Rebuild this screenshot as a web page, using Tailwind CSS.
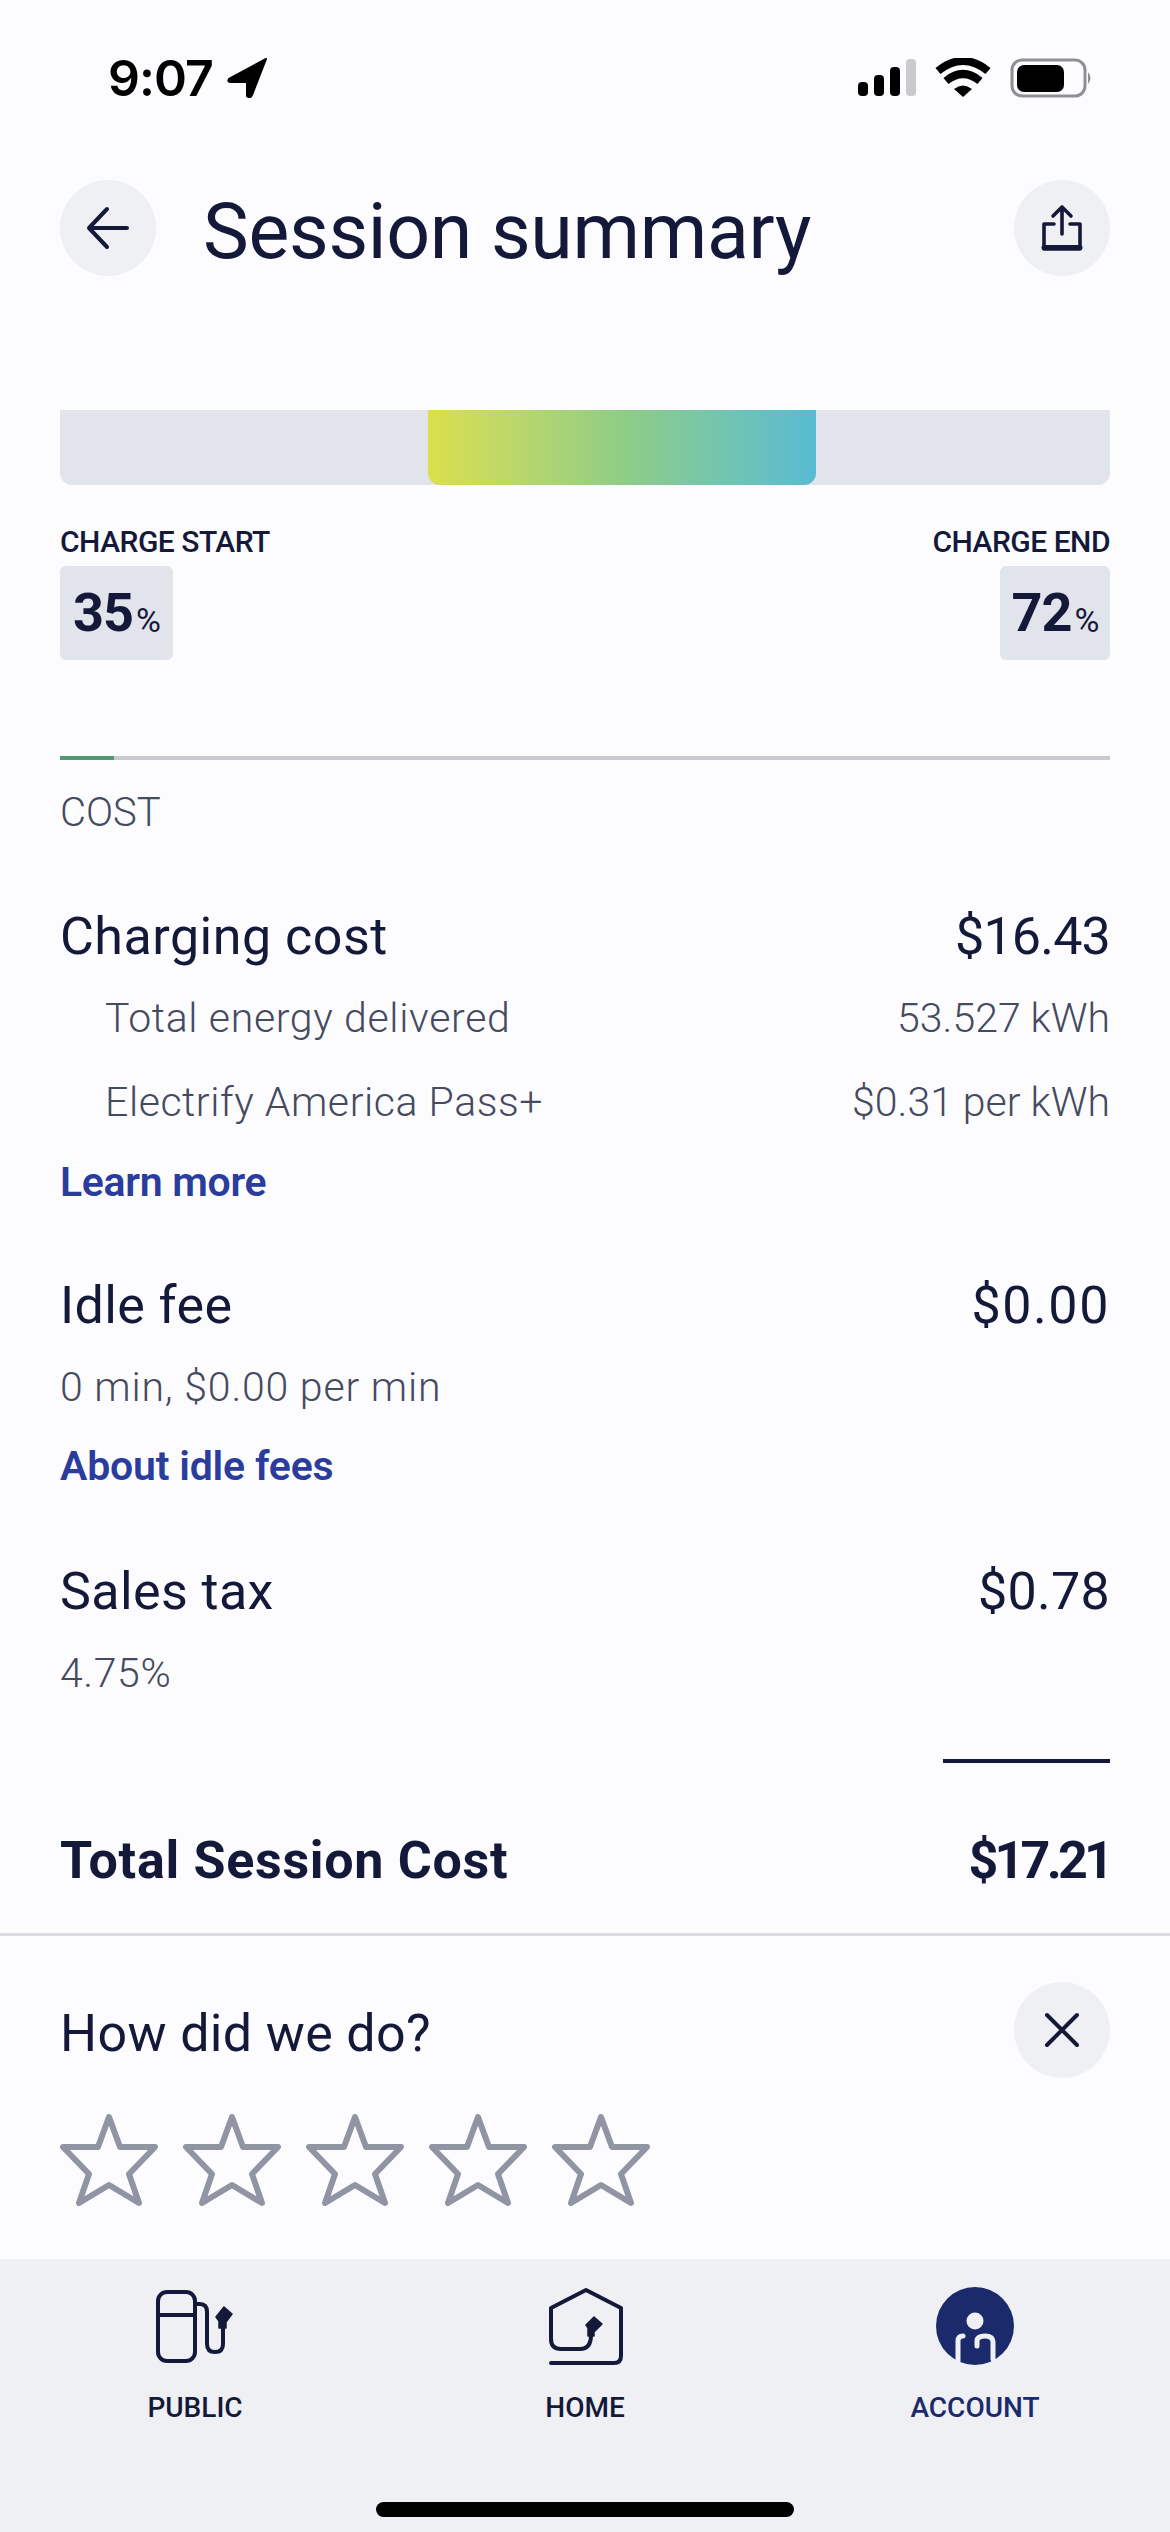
<!DOCTYPE html>
<html lang="en">

<head>
    <meta charset="UTF-8">
    <meta name="viewport" content="width=device-width, initial-scale=1.0">
    <title>Session summary</title>
    <script src="https://cdn.jsdelivr.net/npm/@tailwindcss/browser@4"></script>
</head>

<body>
    <main class="w-[1170px] h-[2532px] flex flex-col bg-[#fcfcff] text-[#14193a] font-['Roboto',sans-serif] overflow-hidden">
        <!-- status bar -->
        <div class="h-[180px] shrink-0 pt-[58px] pl-[108px] pr-[77px] flex justify-between items-start text-black">
            <div class="flex items-center h-[40px] gap-[14px]">
                <span class="font-['Inter',sans-serif] font-semibold text-[50px] leading-[40px] tracking-[-1px]">9:07</span>
                <svg width="42" height="40" viewBox="0 0 42 40"><path d="M39 1 L2 21 Q0 24 4 24 L20 24 L20 38 Q23 41 25 37 Z" fill="#000" stroke="#000" stroke-width="2" stroke-linejoin="round"/></svg>
            </div>
            <div class="flex items-center h-[40px]">
                <svg width="235" height="40" viewBox="0 0 235 40">
                    <rect x="0" y="24" width="10" height="14" rx="4" fill="#000"/>
                    <rect x="16" y="17" width="10" height="21" rx="4" fill="#000"/>
                    <rect x="32" y="9" width="10" height="29" rx="4" fill="#000"/>
                    <rect x="48" y="1" width="10" height="37" rx="4" fill="#c9c9ce"/>
                    <path d="M80 13 Q105 -7 130 13 M88 23 Q105 9 122 23" fill="none" stroke="#000" stroke-width="8"/>
                    <path d="M96 31 Q105 24 114 31 L105 39 Z" fill="#000"/>
                    <rect x="154" y="2" width="73" height="36" rx="10" fill="none" stroke="#8f8f94" stroke-width="3"/>
                    <rect x="159" y="7" width="47" height="27" rx="7" fill="#000"/>
                    <path d="M230 14 Q235 20 230 26 Z" fill="#8f8f94"/>
                </svg>
            </div>
        </div>

        <div class="px-[60px] flex flex-col shrink-0">
            <!-- header -->
            <div class="flex items-center h-[96px]">
                <div class="w-[96px] h-[96px] rounded-full bg-[#eff0f4] flex items-center justify-center">
                    <svg width="44" height="44" viewBox="0 0 44 44" fill="none" stroke="#14193a" stroke-width="4" stroke-linecap="round" stroke-linejoin="round"><path d="M3 22 H41 M21 3 L3 22 L21 41"/></svg>
                </div>
                <h1 class="ml-[47px] mt-[7px] text-[77px] leading-[96px] font-normal tracking-[-0.3px] flex-1">Session summary</h1>
                <div class="w-[96px] h-[96px] rounded-full bg-[#eff0f4] flex items-center justify-center">
                    <svg width="44" height="48" viewBox="0 0 44 48" fill="none" stroke="#14193a" stroke-width="3.6" stroke-linecap="round" stroke-linejoin="round"><path d="M22 30 V3 M13 12 L22 3 L31 12 M14 20 H4 V45 H40 V20 H30"/><path d="M4 43.5 H40" stroke-width="5"/></svg>
                </div>
            </div>

            <!-- charge bar -->
            <div class="mt-[134px] h-[75px] rounded-b-[12px] bg-[#e1e4ea] pl-[368px] shrink-0">
                <div class="w-[388px] h-full rounded-b-[12px] bg-gradient-to-r from-[#dbdf4a] via-[#8fcd85] to-[#57bbd2]"></div>
            </div>
            <div class="mt-[39px] h-[36px] flex justify-between text-[30px] leading-[36px] font-medium tracking-[-0.5px]">
                <span>CHARGE START</span>
                <span>CHARGE END</span>
            </div>
            <div class="mt-[6px] flex justify-between">
                <div class="w-[113px] h-[94px] rounded-[6px] bg-[#e1e4ea] flex items-center justify-center font-bold text-[54px] leading-none tracking-[-1px]">35<span class="ml-[3px] text-[34px] font-normal mt-[14px] tracking-[-1px]">%</span></div>
                <div class="w-[110px] h-[94px] rounded-[6px] bg-[#e1e4ea] flex items-center justify-center font-bold text-[54px] leading-none tracking-[-1px]">72<span class="ml-[3px] text-[34px] font-normal mt-[14px] tracking-[-1px]">%</span></div>
            </div>

            <!-- progress line -->
            <div class="mt-[96px] h-[4px] bg-[#c9cad0]">
                <div class="w-[54px] h-full bg-[#4f9a72]"></div>
            </div>
            <div class="mt-[22px] h-[60px] text-[40px] leading-[62px] font-light text-[#454a5e]">COST</div>

            <!-- cost rows -->
            <div class="mt-[64px] h-[60px] flex justify-between text-[52px] leading-[62px]"><span class="tracking-[0.5px]">Charging cost</span><span class="tracking-[-0.8px]">$16.43</span></div>
            <div class="mt-[26px] h-[50px] pl-[45px] flex justify-between text-[41px] leading-[53px] font-light text-[#454a5e]"><span class="tracking-[0.66px]">Total energy delivered</span><span>53.527 kWh</span></div>
            <div class="mt-[34px] h-[50px] pl-[45px] flex justify-between text-[41px] leading-[53px] font-light text-[#454a5e]"><span class="tracking-[0.56px]">Electrify America Pass+</span><span>$0.31 per kWh</span></div>
            <div class="mt-[30px] h-[50px] text-[41px] leading-[52px] font-semibold text-[#2a3c9c] tracking-[-0.3px]">Learn more</div>

            <div class="mt-[68px] h-[60px] flex justify-between text-[52px] leading-[64px]"><span class="tracking-[0.4px]">Idle fee</span><span class="tracking-[1.6px]">$0.00</span></div>
            <div class="mt-[27px] h-[50px] text-[41px] leading-[53px] font-light text-[#454a5e] tracking-[0.8px]">0 min, $0.00 per min</div>
            <div class="mt-[29px] h-[50px] text-[41px] leading-[52px] font-semibold text-[#2a3c9c] tracking-[-0.2px]">About idle fees</div>

            <div class="mt-[70px] h-[60px] flex justify-between text-[52px] leading-[64px]"><span class="tracking-[0.4px]">Sales tax</span><span class="tracking-[0.3px]">$0.78</span></div>
            <div class="mt-[27px] h-[50px] text-[41px] leading-[53px] font-light text-[#454a5e] tracking-[0.6px]">4.75%</div>

            <div class="mt-[62px] h-[4px] w-[167px] self-end bg-[#14193a]"></div>
            <div class="mt-[66px] h-[60px] flex justify-between text-[52px] leading-[64px] font-bold"><span class="tracking-[0.7px]">Total Session Cost</span><span class="tracking-[-3.8px]">$17.21</span></div>
        </div>

        <!-- feedback -->
        <div class="mt-[44px] flex-1 border-t-[3px] border-[#dcdde3] px-[60px] pt-[46px] flex flex-col">
            <div class="flex justify-between items-center h-[96px]">
                <span class="text-[52px] leading-[60px] mt-[8px] tracking-[0.35px]">How did we do?</span>
                <div class="w-[96px] h-[96px] rounded-full bg-[#eff0f4] flex items-center justify-center">
                    <svg width="36" height="36" viewBox="0 0 36 36" fill="none" stroke="#14193a" stroke-width="4" stroke-linecap="round"><path d="M3 3 L33 33 M33 3 L3 33"/></svg>
                </div>
            </div>
            <div class="mt-[36px] flex gap-[25px]">
                <svg width="98" height="92" viewBox="0 0 98 92" fill="none" stroke="#9094a3" stroke-width="6" stroke-linejoin="round"><path d="M49 3 L60 33 H95 L69 60 L79 89 L49 71 L19 89 L29 60 L3 33 H38 Z"/></svg>
                <svg width="98" height="92" viewBox="0 0 98 92" fill="none" stroke="#9094a3" stroke-width="6" stroke-linejoin="round"><path d="M49 3 L60 33 H95 L69 60 L79 89 L49 71 L19 89 L29 60 L3 33 H38 Z"/></svg>
                <svg width="98" height="92" viewBox="0 0 98 92" fill="none" stroke="#9094a3" stroke-width="6" stroke-linejoin="round"><path d="M49 3 L60 33 H95 L69 60 L79 89 L49 71 L19 89 L29 60 L3 33 H38 Z"/></svg>
                <svg width="98" height="92" viewBox="0 0 98 92" fill="none" stroke="#9094a3" stroke-width="6" stroke-linejoin="round"><path d="M49 3 L60 33 H95 L69 60 L79 89 L49 71 L19 89 L29 60 L3 33 H38 Z"/></svg>
                <svg width="98" height="92" viewBox="0 0 98 92" fill="none" stroke="#9094a3" stroke-width="6" stroke-linejoin="round"><path d="M49 3 L60 33 H95 L69 60 L79 89 L49 71 L19 89 L29 60 L3 33 H38 Z"/></svg>
            </div>
        </div>

        <!-- tab bar -->
        <nav class="h-[273px] shrink-0 bg-[#eef0f4] pt-[28px] flex flex-col">
            <div class="flex text-[28px] leading-[36px] font-medium">
                <div class="w-[390px] flex flex-col items-center">
                    <svg width="78" height="78" viewBox="0 0 78 78" fill="none" stroke="#14193a" stroke-width="4" stroke-linecap="round" stroke-linejoin="round">
                        <rect x="2" y="5" width="37" height="69" rx="9"/>
                        <path d="M2 28 H39 M39 17 H44 Q51 17 51 25 V57 Q51 65 59 65 Q67 65 67 57 V40"/>
                        <path d="M63 41 V34 L60 30 L68 20 L76 27 L70 35 V41 Z" fill="#14193a" stroke-width="1.5"/>
                    </svg>
                    <span class="mt-[25px]">PUBLIC</span>
                </div>
                <div class="w-[390px] flex flex-col items-center">
                    <svg width="78" height="78" viewBox="0 0 78 78" fill="none" stroke="#14193a" stroke-width="4" stroke-linecap="round" stroke-linejoin="round">
                        <path d="M5 76 H68 Q75 76 75 69 V21 L40 3 L5 21 V52 Q5 62 15 62 H34 Q45 62 45 48"/>
                        <path d="M42 49 V41 L40 38 L48 30 L56 37 L48 45 V49 Z" fill="#14193a" stroke-width="1.5"/>
                    </svg>
                    <span class="mt-[25px]">HOME</span>
                </div>
                <div class="w-[390px] flex flex-col items-center text-[#1b2a6b]">
                    <svg width="78" height="78" viewBox="0 0 78 78" fill="none">
                        <circle cx="39" cy="39" r="39" fill="#1b2a6b"/>
                        <circle cx="39" cy="34" r="8.5" fill="#eef0f4"/>
                        <path d="M22 74 V54 Q22 49 27 49 M41 59 V54 Q41 49 49 49 Q57 49 57 55 V72" stroke="#eef0f4" stroke-width="5" stroke-linecap="round"/>
                    </svg>
                    <span class="mt-[25px]">ACCOUNT</span>
                </div>
            </div>
            <div class="mt-[76px] w-[418px] h-[15px] self-center rounded-full bg-black"></div>
        </nav>
    </main>
</body>

</html>
